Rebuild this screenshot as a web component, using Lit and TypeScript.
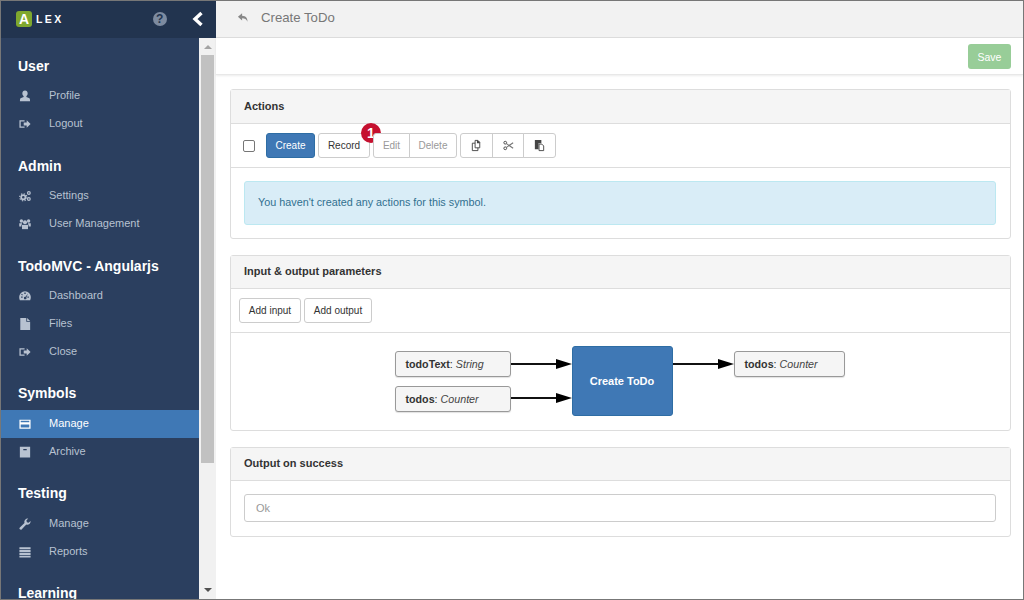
import { LitElement, html, css, svg } from 'lit';
import { customElement } from 'lit/decorators.js';

const icons: Record<string, unknown> = {
  user: svg`<path d="M7 .5c1.900 0 3.100 1.400 3.100 3.400 0 1.400-.6 2.700-1.500 3.300v1l2.900 1.200c1 .4 1.400 1 1.400 3.600H1.100c0-2.600.4-3.200 1.400-3.600l2.900-1.200v-1C4.500 6.600 3.900 5.300 3.900 3.900 3.900 1.900 5.100.5 7 .5z"/>`,
  logout: svg`<path fill-rule="evenodd" d="M.5 2.500h6v1.500H2v6h4.500v1.500h-6z"/><path d="M5.500 5.300h3.500V2.500L13.500 7 9 11.500V8.700H5.500z"/>`,
  cogs: svg`<circle cx="5" cy="8.500" r="2.500" fill="none" stroke="currentColor" stroke-width="2"/><circle cx="5" cy="8.500" r="4.200" fill="none" stroke="currentColor" stroke-width="1.300" stroke-dasharray="1.600 1.700"/><circle cx="11.500" cy="3.500" r="1.600" fill="none" stroke="currentColor" stroke-width="1.400"/><circle cx="11.500" cy="10.500" r="1.600" fill="none" stroke="currentColor" stroke-width="1.400"/>`,
  users: svg`<circle cx="7" cy="5" r="2.400"/><circle cx="2.800" cy="3.600" r="2"/><circle cx="11.200" cy="3.600" r="2"/><path d="M3.500 8h7v5h-7z"/><path d="M.3 6h3.200v1.500H2.800V10H.3zM10.500 6h3.200v4h-2.500V7.500h-.7z"/>`,
  dashboard: svg`<path fill-rule="evenodd" d="M7 1.500a6.800 6.800 0 0 1 6.800 6.800c0 1.500-.3 2.700-.8 3.700H1c-.5-1-.8-2.200-.8-3.700A6.800 6.800 0 0 1 7 1.500zM6.200 3v1.800h1.600V3zM2.500 7.500v1.600h1.700V7.500zM9.800 7.500v1.600h1.700V7.500zM3.300 4.300l-.8.800 1.200 1.200.8-.8zM10.500 4L7.600 8a1.500 1.500 0 1 0 1 .8z"/>`,
  file: svg`<path d="M1.500 0h7v4.500H13V14H1.500z"/><path d="M9.500 0L13 3.600H9.500z"/>`,
  card: svg`<path fill-rule="evenodd" d="M.5 2h13v10.500H.5zM2 3.300v1.700h10V3.300zM2 7.500v3.700h10V7.500z"/>`,
  archive: svg`<path fill-rule="evenodd" d="M1 1h12v12.500H1zM5 3.500v1.500h4V3.500z"/>`,
  wrench: svg`<path d="M13.500 3.400a3.900 3.900 0 0 1-5 4.300L3.300 13.200a1.500 1.500 0 0 1-2.300-2.200l5.400-5.300A3.900 3.900 0 0 1 10.800.7L8.600 3l.6 2 2 .6z"/>`,
  list: svg`<path d="M.5 1.500h13v2.400H.5zM.5 4.800h13v2.400H.5zM.5 8.100h13v2.400H.5zM.5 11.400h13v2.100H.5z"/>`,
  reply: svg`<path d="M5.500 2.500L1 6.300l4.500 3.800V7.800c3 0 4.600.8 5.700 3.700.4-3.600-1.600-6.300-5.700-6.500z"/>`,
  copy: svg`<path fill="none" stroke="currentColor" d="M5.500 1.500h3l2 2v6h-5zM5.500 4.500h-3v8h6v-3"/><path d="M7.500 1.500h1l2 2v1h-3z"/>`,
  cut: svg`<circle cx="3.500" cy="4" r="1.500" fill="none" stroke="currentColor"/><circle cx="3.500" cy="10" r="1.500" fill="none" stroke="currentColor"/><path fill="none" stroke="#777" stroke-width="1.200" d="M4.800 5l7.200 5M4.800 9l7.200-5"/>`,
  paste: svg`<path d="M2 1h7v3.500H6V11H2z"/><path fill="#fff" stroke="currentColor" d="M6.500 5.500h3l2 2v5h-5z"/>`,
};

const icon = (name: string) =>
  html`<svg class="icon" viewBox="0 0 14 14" fill="currentColor">${icons[name]}</svg>`;

const nav = [
  { title: 'User', items: [['user', 'Profile'], ['logout', 'Logout']] },
  { title: 'Admin', items: [['cogs', 'Settings'], ['users', 'User Management']] },
  { title: 'TodoMVC - Angularjs', items: [['dashboard', 'Dashboard'], ['file', 'Files'], ['logout', 'Close']] },
  { title: 'Symbols', items: [['card', 'Manage', true], ['archive', 'Archive']] },
  { title: 'Testing', items: [['wrench', 'Manage'], ['list', 'Reports']] },
  { title: 'Learning', items: [] },
];

@customElement('app-root')
export class AppRoot extends LitElement {
  static styles = css`
    :host {
      display: flex;
      width: 1024px;
      height: 600px;
      box-sizing: border-box;
      border: 1px solid #777;
      overflow: hidden;
      background: #fff;
      font-family: 'Liberation Sans', Arial, sans-serif;
      font-size: 11px;
      color: #333;
    }
    .icon { width: 14px; height: 14px; display: block; }

    .side { width: 215px; flex: none; display: flex; flex-direction: column; }
    .brand {
      height: 37px;
      flex: none;
      box-sizing: border-box;
      background: #22344f;
      display: flex;
      align-items: center;
      padding: 0 0 2px 15px;
    }
    .logo {
      width: 16px;
      height: 16px;
      border-radius: 3px;
      background: #7fa82e;
      color: #fff;
      font-weight: bold;
      font-size: 14px;
      line-height: 16px;
      text-align: center;
    }
    .lex { color: #fff; font-weight: bold; font-size: 10.500px; letter-spacing: 2.400px; margin-left: 4px; }
    .help {
      width: 14px;
      height: 14px;
      border-radius: 50%;
      background: #7d8ba0;
      color: #22344f;
      font-weight: bold;
      font-size: 12px;
      line-height: 14px;
      text-align: center;
      margin-left: 89px;
    }
    .chev { width: 12px; height: 16px; margin-left: 25px; display: block; }
    .side-body { flex: 1; display: flex; min-height: 0; }
    .nav { width: 198px; flex: none; background: #2b3f5f; overflow: hidden; }
    .nav h3 {
      margin: 0;
      height: 44px;
      box-sizing: border-box;
      padding: 20px 0 0 17px;
      color: #fff;
      font-size: 14px;
      line-height: 16px;
      font-weight: bold;
    }
    .group:nth-child(n + 4) h3 { padding-top: 19px; }
    .row {
      height: 28px;
      display: flex;
      align-items: center;
      padding-left: 18px;
      color: #b8c2d1;
      font-size: 11px;
    }
    .row .icon { margin-right: 18px; width: 12px; height: 12px; }
    .row span { position: relative; top: -1px; }
    .row.active { background: #3f78b5; color: #fff; }
    .bar { width: 17px; flex: none; background: #f1f1f1; display: flex; flex-direction: column; align-items: center; }
    .thumb { width: 13px; height: 408px; background: #c1c1c1; margin-top: 1px; }
    .arrow { width: 0; height: 0; border-left: 4px solid transparent; border-right: 4px solid transparent; }
    .arrow.up { border-bottom: 4px solid #a3a3a3; margin-top: 7px; margin-bottom: 5px; }
    .arrow.down { border-top: 4px solid #505050; margin-top: auto; margin-bottom: 7px; }

    .main { flex: 1; min-width: 0; display: flex; flex-direction: column; }
    .top {
      height: 37px;
      flex: none;
      box-sizing: border-box;
      background: #f2f2f2;
      border-bottom: 1px solid #ddd;
      display: flex;
      align-items: center;
      padding: 0 0 3px 21px;
      color: #777;
      font-size: 13.200px;
    }
    .top .icon { width: 13px; height: 13px; margin-right: 11px; color: #888; }
    .actions {
      height: 37px;
      flex: none;
      box-sizing: border-box;
      display: flex;
      justify-content: flex-end;
      align-items: center;
      padding-right: 12px;
      border-bottom: 1px solid #e8e8e8;
      box-shadow: 0 1px 2px rgba(0, 0, 0, 0.08);
    }
    .save {
      width: 43px;
      height: 25px;
      border-radius: 3px;
      background: #98cd98;
      color: #fff;
      font-size: 10.500px;
      display: flex;
      align-items: center;
      justify-content: center;
      margin-top: 1px;
    }
    .content { padding: 14px 12px 0 14px; display: flex; flex-direction: column; gap: 16px; }
    .panel { border: 1px solid #ddd; border-radius: 3px; }
    .head {
      height: 33px;
      box-sizing: border-box;
      background: #f5f5f5;
      border-bottom: 1px solid #ddd;
      padding: 0 0 3px 13px;
      display: flex;
      align-items: center;
      font-weight: bold;
      color: #333;
    }
    .head.tall { height: 34px; padding-bottom: 1px; }
    .tools { height: 44px; box-sizing: border-box; border-bottom: 1px solid #ddd; display: flex; align-items: center; padding-left: 12px; }
    .check { width: 10px; height: 10px; border: 1px solid #767676; border-radius: 2px; background: #fff; margin-right: 11px; }
    .btn {
      height: 25px;
      box-sizing: border-box;
      border: 1px solid #ccc;
      border-radius: 3px;
      background: #fff;
      color: #333;
      display: flex;
      align-items: center;
      justify-content: center;
      font-size: 10px;
      position: relative;
    }
    .btn.primary { background: #3f78b5; border-color: #2e6da4; color: #fff; width: 49px; margin-right: 3px; }
    .btn.record { width: 52px; margin-right: 3px; }
    .badge {
      position: absolute;
      top: -11px;
      right: -12px;
      width: 20px;
      height: 20px;
      border-radius: 50%;
      background: #c5102f;
      color: #fff;
      font-weight: bold;
      font-size: 14px;
      line-height: 20px;
      text-align: center;
    }
    .btns { display: flex; margin-right: 3px; }
    .btns .btn { border-radius: 0; margin-left: -1px; }
    .btns .btn:first-child { border-radius: 3px 0 0 3px; margin-left: 0; }
    .btns .btn:last-child { border-radius: 0 3px 3px 0; }
    .off { color: #999; }
    .edit { width: 37px; }
    .del { width: 48px; }
    .tool { width: 33px; color: #444; }
    .tool.mid { width: 32px; }
    .tool .icon { width: 13px; height: 13px; }
    .info {
      margin: 13px 14px 13px 13px;
      height: 44px;
      box-sizing: border-box;
      background: #d9edf7;
      border: 1px solid #bce8f1;
      border-radius: 3px;
      color: #31708f;
      font-size: 10.800px;
      display: flex;
      align-items: center;
      padding: 0 0 2px 13px;
    }
    .adds { height: 44px; box-sizing: border-box; border-bottom: 1px solid #ddd; display: flex; align-items: center; gap: 3px; padding-left: 8px; }
    .adds .btn:first-child { width: 62px; }
    .adds .btn:last-child { width: 68px; }
    .diagram { display: flex; justify-content: center; padding: 13px 2px 14px 0; }
    .col { display: flex; flex-direction: column; gap: 9px; padding-top: 5px; }
    .node {
      height: 26px;
      box-sizing: border-box;
      border: 1px solid #999;
      border-radius: 3px;
      background: #f5f5f5;
      box-shadow: 0 1px 1px rgba(0, 0, 0, 0.12);
      display: flex;
      align-items: center;
      padding-left: 10px;
      color: #333;
      font-size: 10.700px;
    }
    .node i { margin-left: 3px; color: #444; }
    .col.left .node { width: 116px; }
    .col.right .node { width: 111px; }
    .links { width: 61px; height: 70px; display: block; flex: none; }
    .symbol {
      width: 101px;
      height: 70px;
      box-sizing: border-box;
      background: #3f78b5;
      border: 1px solid #2e6da4;
      border-radius: 3px;
      color: #fff;
      font-weight: bold;
      display: flex;
      align-items: center;
      justify-content: center;
    }
    .field { padding: 13px 14px 14px 13px; }
    .input {
      height: 28px;
      box-sizing: border-box;
      border: 1px solid #ccc;
      border-radius: 3px;
      color: #999;
      display: flex;
      align-items: center;
      padding-left: 11px;
    }
  `;

  renderNav() {
    return nav.map(
      (group) => html`
        <div class="group">
          <h3>${group.title}</h3>
          ${group.items.map(
            ([ic, label, active]) => html`
              <div class="row ${active ? 'active' : ''}">${icon(ic as string)}<span>${label}</span></div>
            `
          )}
        </div>
      `
    );
  }

  render() {
    return html`
      <div class="side">
        <div class="brand">
          <div class="logo">A</div>
          <div class="lex">LEX</div>
          <div class="help">?</div>
          <svg class="chev" viewBox="0 0 12 16"><path d="M9.500 2L3 8l6.500 6" fill="none" stroke="#fff" stroke-width="3.400"/></svg>
        </div>
        <div class="side-body">
          <div class="nav">${this.renderNav()}</div>
          <div class="bar">
            <div class="arrow up"></div>
            <div class="thumb"></div>
            <div class="arrow down"></div>
          </div>
        </div>
      </div>
      <div class="main">
        <div class="top">${icon('reply')}Create ToDo</div>
        <div class="actions"><div class="save">Save</div></div>
        <div class="content">
          <div class="panel">
            <div class="head tall">Actions</div>
            <div class="tools">
              <div class="check"></div>
              <div class="btn primary">Create</div>
              <div class="btn record">Record<div class="badge">1</div></div>
              <div class="btns">
                <div class="btn off edit">Edit</div>
                <div class="btn off del">Delete</div>
              </div>
              <div class="btns">
                <div class="btn tool">${icon('copy')}</div>
                <div class="btn tool mid">${icon('cut')}</div>
                <div class="btn tool">${icon('paste')}</div>
              </div>
            </div>
            <div class="info">You haven't created any actions for this symbol.</div>
          </div>
          <div class="panel">
            <div class="head">Input &amp; output parameters</div>
            <div class="adds">
              <div class="btn">Add input</div>
              <div class="btn">Add output</div>
            </div>
            <div class="diagram">
              <div class="col left">
                <div class="node"><b>todoText</b>:<i>String</i></div>
                <div class="node"><b>todos</b>:<i>Counter</i></div>
              </div>
              <svg class="links" viewBox="0 0 61 70">
                <path d="M0 18h46M0 52h46" stroke="#111" stroke-width="2"/>
                <path d="M45 13l16 5-16 5zM45 47l16 5-16 5z" fill="#000"/>
              </svg>
              <div class="symbol">Create ToDo</div>
              <svg class="links" viewBox="0 0 61 70">
                <path d="M0 18h46" stroke="#111" stroke-width="2"/>
                <path d="M45 13l16 5-16 5z" fill="#000"/>
              </svg>
              <div class="col right">
                <div class="node"><b>todos</b>:<i>Counter</i></div>
              </div>
            </div>
          </div>
          <div class="panel">
            <div class="head">Output on success</div>
            <div class="field"><div class="input">Ok</div></div>
          </div>
        </div>
      </div>
    `;
  }
}
